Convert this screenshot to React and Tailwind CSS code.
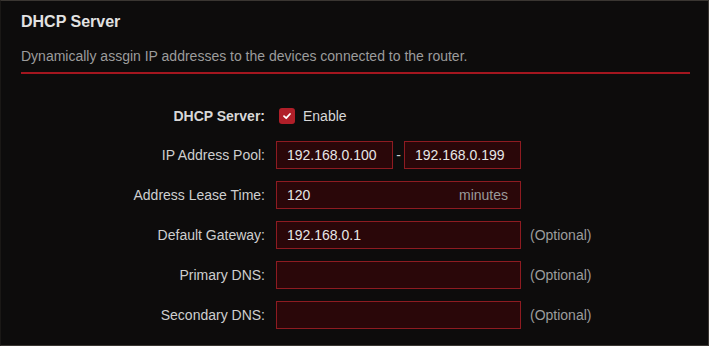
import React from 'react';

const rows = [
  { label: 'Default Gateway:', value: '192.168.0.1' },
  { label: 'Primary DNS:', value: '' },
  { label: 'Secondary DNS:', value: '' },
];

const Field = ({ value, className = '', children }) => (
  <div
    className={`h-[28px] flex items-center px-[10px] bg-[#2a0709] border border-[#8e1b21] text-[#e6e6e6] ${className}`}
  >
    <span className="flex-1">{value}</span>
    {children}
  </div>
);

const Row = ({ label, bold, className = '', children }) => (
  <div className={`flex items-center h-[28px] ${className}`}>
    <div className={`w-[265px] pr-[1px] text-right ${bold ? 'font-bold text-[#d8d8d8]' : 'text-[#cfcfcf]'}`}>
      {label}
    </div>
    <div className="ml-[10px] flex items-center">{children}</div>
  </div>
);

const App = () => {
  return (
    <div
      className="w-[709px] h-[346px] bg-[#0d0c0c] border border-[#3a3632] border-l-[#1a1816] overflow-hidden text-[14px]"
      style={{ fontFamily: '"Liberation Sans", Arial, sans-serif' }}
    >
      <div className="pl-[20px] pr-[18px]">
        <h2 className="pt-[11px] text-[16px] font-bold text-[#e2e2e2] leading-[20px]">DHCP Server</h2>
        <p className="mt-[15px] text-[#9c9c9c] leading-[18px]">
          Dynamically assgin IP addresses to the devices connected to the router.
        </p>
        <div className="mt-[7px] h-[2px] bg-[#a3161f]" />
      </div>

      <div className="mt-[28px] flex flex-col gap-[12px]">
        <Row label="DHCP Server:" bold className="mb-[-1px]">
          <span className="ml-[3px] w-[16px] h-[16px] rounded-[3px] bg-[#b01f29] flex items-center justify-center">
            <svg width="10" height="10" viewBox="0 0 10 10">
              <path d="M2 5.2 L4.2 7.2 L8 3" stroke="#fff" strokeWidth="1.8" fill="none" strokeLinecap="round" strokeLinejoin="round" />
            </svg>
          </span>
          <span className="ml-[8px] text-[#d8d8d8]">Enable</span>
        </Row>
        <Row label="IP Address Pool:">
          <Field value="192.168.0.100" className="w-[117px]" />
          <span className="w-[11px] text-center text-[#cfcfcf]">-</span>
          <Field value="192.168.0.199" className="w-[117px]" />
        </Row>
        <Row label="Address Lease Time:">
          <Field value="120" className="w-[245px] pr-[12px]">
            <span className="text-[#9a9a9a]">minutes</span>
          </Field>
        </Row>
        {rows.map((r) => (
          <Row key={r.label} label={r.label}>
            <Field value={r.value} className="w-[245px]" />
            <span className="ml-[9px] text-[#9c9c9c]">(Optional)</span>
          </Row>
        ))}
      </div>
    </div>
  );
};

export default App;
